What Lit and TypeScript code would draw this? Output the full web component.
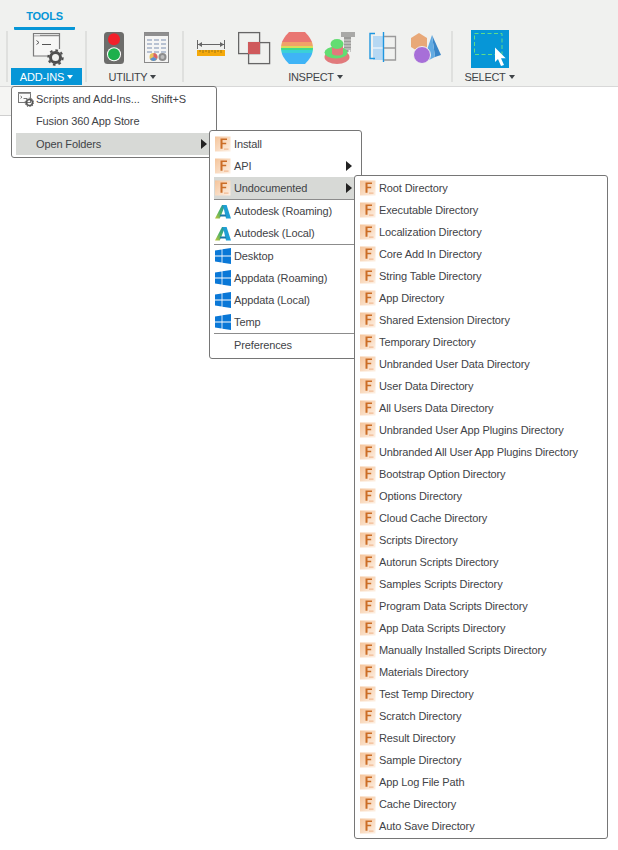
import { LitElement, html, css } from 'lit'
import { customElement } from 'lit/decorators.js'

const fIcon = html`
  <svg class="ico" width="16" height="16" viewBox="0 0 16 16">
    <defs>
      <linearGradient id="peach" x1="0" y1="0" x2="1" y2="1">
        <stop offset="0" stop-color="#f5c49a" />
        <stop offset="1" stop-color="#fdf0e4" />
      </linearGradient>
    </defs>
    <rect x="0" y="0.5" width="15.5" height="15" fill="url(#peach)" />
    <path d="M5.5 2.5H12v1.6H7.5v2.6h3.7v1.6H7.5v4.4h-2z" fill="#cb6d26" />
    <rect x="9" y="12.6" width="4.5" height="1" fill="#efb083" />
  </svg>
`

const autodeskIcon = html`
  <svg class="ico" width="16" height="16" viewBox="0 0 16 16">
    <defs>
      <linearGradient id="adsk" x1="0" y1="1" x2="1" y2="0">
        <stop offset="0" stop-color="#c4c63a" />
        <stop offset="0.5" stop-color="#46b06a" />
        <stop offset="1" stop-color="#1a8fb8" />
      </linearGradient>
    </defs>
    <path d="M0 15.5 7 2h3.2L4.8 15.5z" fill="url(#adsk)" />
    <path d="M8 2h3.6L16 15.5h-5z" fill="#1f9fd4" />
    <path d="M5.4 11.5h5.2l.8 2H4.6z" fill="#1877a8" />
  </svg>
`

const winIcon = html`
  <svg class="ico" width="16" height="16" viewBox="0 0 16 16">
    <path d="M0 2.4 6.6 1.4v6.1H0zM7.4 1.2 16 0v7.5H7.4zM0 8.4h6.6v6.1L0 13.6zM7.4 8.4H16V16l-8.6-1.3z" fill="#0a78d7" />
  </svg>
`

const scriptsIcon = html`
  <svg class="ico" width="16" height="16" viewBox="0 0 16 16">
    <rect x="0.5" y="1.5" width="12" height="10" fill="#fafafa" stroke="#777" />
    <path d="M0.5 2.5h12" stroke="#999" />
    <path d="M2.5 5l1.5 1.2-1.5 1.2M5.5 7.5h3.5" fill="none" stroke="#555" stroke-width="0.8" />
    <circle cx="11.5" cy="11.5" r="3" fill="none" stroke="#555" stroke-width="1.6" />
    <circle cx="11.5" cy="11.5" r="4.3" fill="none" stroke="#555" stroke-width="1" stroke-dasharray="1.4 1.3" />
  </svg>
`

const addInsIcon = html`
  <svg width="32" height="36" viewBox="0 0 32 36">
    <path d="M18 26H1.5V3.5h26V19" fill="#f7f7f6" stroke="#7b7b7b" stroke-width="1.2" />
    <path d="M2 5.5h25" stroke="#8a8a8a" stroke-width="1.5" />
    <path d="M2 5h6" stroke="#fff" stroke-width="1" />
    <path d="M4.5 10.5 7 12.5 4.5 14.5M10 14.5h9" fill="none" stroke="#555" stroke-width="1" />
    <circle cx="23.5" cy="27.5" r="5" fill="none" stroke="#4f4f4f" stroke-width="3" />
    <circle cx="23.5" cy="27.5" r="7.2" fill="none" stroke="#4f4f4f" stroke-width="2" stroke-dasharray="2.6 3" />
  </svg>
`

const lightIcon = html`
  <svg width="40" height="38" viewBox="0 0 40 38">
    <rect x="0" y="2" width="20" height="32" rx="3.5" fill="#6d6d6b" />
    <circle cx="10" cy="9.3" r="6" fill="#f2202a" />
    <circle cx="10" cy="24.3" r="7" fill="#fff" />
    <circle cx="10" cy="24.3" r="6" fill="#1db04c" />
  </svg>
`

const tableIcon = html`
  <svg width="26" height="38" viewBox="0 0 26 38">
    <rect x="0.5" y="2.5" width="24" height="30" fill="#f5f5f4" stroke="#8a8a8a" />
    <rect x="1" y="3" width="23" height="3" fill="#8f8f8f" />
    <path d="M3 10h5M10 10h5M17 10h5M3 14h5M10 14h5M17 14h5M3 18h5M10 18h5M17 18h5M3 22h5M10 22h5M17 22h5" stroke="#b8c2d2" stroke-width="2" />
    <circle cx="9.5" cy="27" r="4" fill="#e9c45d" />
    <path d="M9.5 27V23a4 4 0 0 1 3.5 6z" fill="#d9636a" />
    <path d="M9.5 27l3.5 2a4 4 0 0 1-7 0z" fill="#5b8fd0" />
    <circle cx="18.5" cy="27" r="4" fill="#8d8d8d" />
    <circle cx="18.5" cy="27" r="2" fill="#bdbdbd" />
  </svg>
`

const rulerIcon = html`
  <svg width="41" height="38" viewBox="0 0 41 38">
    <path d="M0.5 10v9M27.5 10v9M1 14.5h26" stroke="#666" stroke-width="1" />
    <path d="M1 14.5l4-2.5v5zM27 14.5l-4-2.5v5z" fill="#666" />
    <rect x="0" y="20" width="28" height="6" fill="#f5a90a" />
    <path d="M3 20v2M6 20v3M9 20v2M12 20v3M15 20v2M18 20v3M21 20v2M24 20v3" stroke="#8a6a10" stroke-width="0.8" />
  </svg>
`

const compareIcon = html`
  <svg width="43" height="38" viewBox="0 0 43 38">
    <rect x="0.6" y="2.6" width="21" height="21" fill="none" stroke="#666" stroke-width="1.3" />
    <rect x="10.6" y="12.6" width="21" height="21" fill="none" stroke="#666" stroke-width="1.3" />
    <rect x="10" y="12" width="12" height="12" fill="#cf5a5c" />
  </svg>
`

const zebraIcon = html`
  <svg width="43" height="38" viewBox="0 0 43 38">
    <defs>
      <linearGradient id="bands" x1="0" y1="0" x2="0" y2="1">
        <stop offset="0.31" stop-color="#e97672" />
        <stop offset="0.31" stop-color="#f0a268" />
        <stop offset="0.44" stop-color="#f0a268" />
        <stop offset="0.44" stop-color="#d8dc58" />
        <stop offset="0.5" stop-color="#d8dc58" />
        <stop offset="0.5" stop-color="#3ddb8c" />
        <stop offset="0.57" stop-color="#3ddb8c" />
        <stop offset="0.57" stop-color="#3ad0d8" />
        <stop offset="0.66" stop-color="#3ad0d8" />
        <stop offset="0.66" stop-color="#3fb4f6" />
      </linearGradient>
    </defs>
    <path d="M8 2h16c5 5 8 10 8 16s-3 11-8 16H8C3 29 0 24 0 18S3 7 8 2z" fill="url(#bands)" />
  </svg>
`

const sectionIcon = html`
  <svg width="45" height="38" viewBox="0 0 45 38">
    <path d="M17 2h14v5H17z" fill="#a9a9a7" />
    <path d="M20 7h7v15h-7z" fill="#9a9a98" />
    <path d="M20 10h7M20 13h7M20 16h7M20 19h7" stroke="#d6d6d4" stroke-width="1" />
    <ellipse cx="13" cy="27" rx="12.5" ry="7" fill="#e17a7c" />
    <ellipse cx="12" cy="22.5" rx="11.5" ry="6" fill="#62dd72" />
    <path d="M8 16h11v8c-3 2-8 2-11 0z" fill="#e17a7c" />
    <ellipse cx="13" cy="14" rx="6.5" ry="5" fill="#62dd72" />
    <path d="M24.5 20h2v4h-2z" fill="#f0f1ef" />
  </svg>
`

const sectIcon = html`
  <svg width="42" height="38" viewBox="0 0 42 38">
    <rect x="4" y="6" width="10.5" height="24" fill="#b6d8f3" />
    <path d="M4 18h10.5" stroke="#fff" />
    <path d="M6 3.5H1v25h5M14.5 2v30" fill="none" stroke="#1e96e0" stroke-width="1.4" />
    <path d="M15 6.5h11.5v23.5H15M15 18h11.5" fill="none" stroke="#9a9a9a" stroke-width="1.3" />
  </svg>
`

const solidsIcon = html`
  <svg width="31" height="38" viewBox="0 0 31 38">
    <path d="M8 3l8 5v9l-8 5-8-5V8z" fill="#e8a878" />
    <path d="M21 5 30 25 24 27z" fill="#3a86c8" />
    <path d="M21 5 16 20 18 30 24 27z" fill="#62abe2" />
    <circle cx="11" cy="25" r="8.5" fill="#a76fd8" stroke="#f0f1ef" stroke-width="1" />
  </svg>
`

const selectIcon = html`
  <svg width="38" height="38" viewBox="0 0 38 38">
    <rect width="38" height="38" fill="#0696d7" />
    <rect x="3.5" y="3.5" width="27.5" height="21" fill="none" stroke="#5fdc8a" stroke-dasharray="4 2.5" />
    <path d="M24 17.5 34.7 28.3H30L33 35l-3 1-3-7-3 3z" fill="#fff" />
  </svg>
`

const apiItems = [
  { label: 'Install', icon: fIcon },
  { label: 'API', icon: fIcon, more: true },
  { label: 'Undocumented', icon: fIcon, more: true, active: true },
  { sep: true },
  { label: 'Autodesk (Roaming)', icon: autodeskIcon },
  { label: 'Autodesk (Local)', icon: autodeskIcon },
  { sep: true },
  { label: 'Desktop', icon: winIcon },
  { label: 'Appdata (Roaming)', icon: winIcon },
  { label: 'Appdata (Local)', icon: winIcon },
  { label: 'Temp', icon: winIcon },
  { sep: true },
  { label: 'Preferences' },
]

const directories = [
  'Root Directory',
  'Executable Directory',
  'Localization Directory',
  'Core Add In Directory',
  'String Table Directory',
  'App Directory',
  'Shared Extension Directory',
  'Temporary Directory',
  'Unbranded User Data Directory',
  'User Data Directory',
  'All Users Data Directory',
  'Unbranded User App Plugins Directory',
  'Unbranded All User App Plugins Directory',
  'Bootstrap Option Directory',
  'Options Directory',
  'Cloud Cache Directory',
  'Scripts Directory',
  'Autorun Scripts Directory',
  'Samples Scripts Directory',
  'Program Data Scripts Directory',
  'App Data Scripts Directory',
  'Manually Installed Scripts Directory',
  'Materials Directory',
  'Test Temp Directory',
  'Scratch Directory',
  'Result Directory',
  'Sample Directory',
  'App Log File Path',
  'Cache Directory',
  'Auto Save Directory',
]

@customElement('app-root')
export class AppRoot extends LitElement {
  static styles = css`
    :host {
      display: block;
      position: relative;
      height: 850px;
      background: #fff;
      overflow: hidden;
      font-family: 'Liberation Sans', Arial, sans-serif;
      font-size: 11px;
      letter-spacing: -0.12px;
      color: #3f4347;
    }

    .ribbon {
      height: 86px;
      background: #f0f1ef;
      border-bottom: 1px solid #d8d8d8;
    }

    .tabs {
      height: 30px;
      padding-left: 14px;
    }

    .tab {
      width: 61px;
      height: 27px;
      line-height: 32px;
      text-align: center;
      color: #0696d7;
      font-size: 11px;
      font-weight: bold;
      letter-spacing: -0.2px;
      border-bottom: 3px solid #0696d7;
      border-radius: 0 0 1px 1px;
    }

    .tools {
      display: flex;
      height: 56px;
      padding-left: 6px;
    }

    .divider {
      flex: none;
      width: 2px;
      height: 51px;
      margin-top: 1px;
      background: #dfe0de;
    }

    .group {
      flex: none;
      display: flex;
      flex-direction: column;
    }

    .group-addins { width: 77px; }
    .group-utility { width: 95px; }
    .group-inspect { width: 267px; }
    .group-select { width: 74px; }

    .icons {
      display: flex;
      height: 38px;
    }

    .group-addins .icons { padding-left: 24px; }
    .group-utility .icons { padding-left: 17px; }
    .group-inspect .icons { padding-left: 13px; }
    .group-select .icons { padding-left: 18px; }

    .group-label {
      display: flex;
      align-items: center;
      justify-content: center;
      gap: 3px;
      height: 17px;
      letter-spacing: -0.3px;
      color: #3f4347;
    }

    .group-utility .group-label { padding-right: 4px; }
    .group-inspect .group-label { padding-right: 4px; }
    .group-select .group-label { padding-right: 1px; }

    .group-addins .group-label {
      width: 71px;
      margin-left: 3px;
      background: #0696d7;
      color: #fff;
      letter-spacing: -0.12px;
    }

    .caret {
      width: 0;
      height: 0;
      border-left: 3px solid transparent;
      border-right: 3px solid transparent;
      border-top: 4px solid currentColor;
    }

    .subbar {
      width: 120px;
      height: 28px;
      background: #f5f5f3;
      border-bottom: 1px solid #cfcfcf;
    }

    .menu {
      position: absolute;
      box-sizing: border-box;
      background: #fff;
      border: 1px solid #767676;
      border-radius: 3px;
      padding: 2px 3px 1px 4px;
    }

    .menu-addins {
      left: 11px;
      top: 86px;
      width: 206px;
      height: 72px;
      padding-top: 1px;
      padding-right: 7px;
    }

    .menu-api {
      left: 209px;
      top: 130px;
      width: 153px;
      height: 229px;
    }

    .menu-dirs {
      left: 354px;
      top: 175px;
      width: 254px;
      height: 664px;
      padding-top: 1px;
    }

    .row {
      position: relative;
      display: flex;
      align-items: center;
      gap: 3px;
      height: 22px;
      padding-left: 1px;
      white-space: nowrap;
    }

    .row.active {
      background: #d7d9d6;
    }

    .menu-addins .row {
      padding-left: 2px;
      gap: 2px;
    }

    .no-icon {
      padding-left: 20px;
    }

    .menu-addins .row.no-icon {
      padding-left: 20px;
    }

    .menu-addins .row span.scripts-label {
      width: 113px;
      letter-spacing: -0.03px;
    }

    .arrow {
      position: absolute;
      right: 2px;
      top: 6px;
      width: 0;
      height: 0;
      border-top: 5px solid transparent;
      border-bottom: 5px solid transparent;
      border-left: 6px solid #222;
    }

    .menu-api .arrow {
      right: 6px;
    }

    .gap {
      height: 1px;
    }

    .sep {
      height: 1px;
      background: #8c8c8c;
    }

    .ico {
      flex: none;
    }
  `

  protected render(): unknown {
    return html`
      <div class="ribbon">
        <div class="tabs"><div class="tab">TOOLS</div></div>
        <div class="tools">
          <div class="divider"></div>
          <div class="group group-addins">
            <div class="icons">${addInsIcon}</div>
            <div class="group-label">ADD-INS <span class="caret"></span></div>
          </div>
          <div class="divider"></div>
          <div class="group group-utility">
            <div class="icons">${lightIcon}${tableIcon}</div>
            <div class="group-label">UTILITY <span class="caret"></span></div>
          </div>
          <div class="divider"></div>
          <div class="group group-inspect">
            <div class="icons">
              ${rulerIcon}${compareIcon}${zebraIcon}${sectionIcon}${sectIcon}${solidsIcon}
            </div>
            <div class="group-label">INSPECT <span class="caret"></span></div>
          </div>
          <div class="divider"></div>
          <div class="group group-select">
            <div class="icons">${selectIcon}</div>
            <div class="group-label">SELECT <span class="caret"></span></div>
          </div>
        </div>
      </div>
      <div class="subbar"></div>

      <div class="menu menu-addins">
        <div class="row">
          ${scriptsIcon}<span class="scripts-label">Scripts and Add-Ins...</span><span>Shift+S</span>
        </div>
        <div class="row no-icon">Fusion 360 App Store</div>
        <div class="gap"></div>
        <div class="row no-icon active">Open Folders<span class="arrow"></span></div>
      </div>

      <div class="menu menu-api">
        ${apiItems.map((item) =>
          item.sep
            ? html`<div class="sep"></div>`
            : html`<div class="row ${item.active ? 'active' : ''} ${item.icon ? '' : 'no-icon'}">
                ${item.icon}<span>${item.label}</span>
                ${item.more ? html`<span class="arrow"></span>` : ''}
              </div>`
        )}
      </div>

      <div class="menu menu-dirs">
        ${directories.map((name) => html`<div class="row">${fIcon}<span>${name}</span></div>`)}
      </div>
    `
  }
}

declare global {
  interface HTMLElementTagNameMap {
    'app-root': AppRoot
  }
}
